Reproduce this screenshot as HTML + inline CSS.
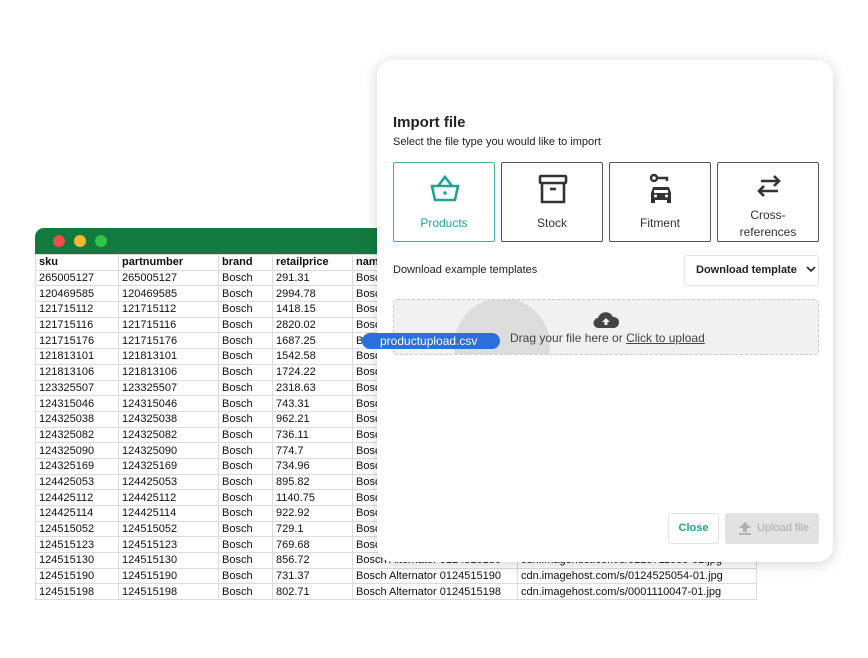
<!DOCTYPE html>
<html><head><meta charset="utf-8"><style>
*{box-sizing:border-box;margin:0;padding:0}
body{width:868px;height:658px;background:#fff;position:relative;overflow:hidden;font-family:"Liberation Sans",sans-serif;}
.win{position:absolute;left:35px;top:228px;width:721px;}
.tb{height:26px;background:#137a3f;border-radius:9px 9px 0 0;position:relative}
.dot{position:absolute;top:7px;width:12px;height:12px;border-radius:50%}
table{border-collapse:collapse;font-size:11px;color:#111;table-layout:fixed;width:721px}
td{height:15.7px;border:1px solid #dcdcdc;padding:0 3px;white-space:nowrap;overflow:hidden;line-height:14px}
tr.h td{font-weight:bold}
.modal{position:absolute;left:377px;top:60px;width:456px;height:502px;background:#fff;border-radius:16px;box-shadow:0 2px 14px rgba(0,0,0,.18)}
.t1{position:absolute;left:16px;top:54px;font-size:15px;font-weight:bold;color:#222}
.t2{position:absolute;left:16px;top:76px;font-size:11px;color:#222}
.card{position:absolute;top:102px;width:102px;height:80px;border:1px solid #555;border-radius:2px;text-align:center;font-size:12px;color:#333}
.card svg{position:absolute;left:35px;top:10px}
.card span{position:absolute;left:0;right:0;top:53px}
.dz{position:absolute;left:16px;top:239px;width:426px;height:56px;background:#f1f1f1;border:1px dashed #ccc;border-radius:4px;overflow:hidden}
</style></head><body>
<div class="win">
<div class="tb"><div class="dot" style="left:18px;background:#ee4f4a"></div><div class="dot" style="left:39px;background:#f8b731"></div><div class="dot" style="left:60px;background:#2fc544"></div></div>
<table>
<colgroup><col style="width:83px"><col style="width:100px"><col style="width:54px"><col style="width:80px"><col style="width:165px"><col style="width:239px"></colgroup>
<tr class="h"><td>sku</td><td>partnumber</td><td>brand</td><td>retailprice</td><td>name</td><td>image</td></tr>
<tr><td>265005127</td><td>265005127</td><td>Bosch</td><td>291.31</td><td>Bosch</td><td></td></tr>
<tr><td>120469585</td><td>120469585</td><td>Bosch</td><td>2994.78</td><td>Bosch</td><td></td></tr>
<tr><td>121715112</td><td>121715112</td><td>Bosch</td><td>1418.15</td><td>Bosch</td><td></td></tr>
<tr><td>121715116</td><td>121715116</td><td>Bosch</td><td>2820.02</td><td>Bosch</td><td></td></tr>
<tr><td>121715176</td><td>121715176</td><td>Bosch</td><td>1687.25</td><td>Bosch</td><td></td></tr>
<tr><td>121813101</td><td>121813101</td><td>Bosch</td><td>1542.58</td><td>Bosch</td><td></td></tr>
<tr><td>121813106</td><td>121813106</td><td>Bosch</td><td>1724.22</td><td>Bosch</td><td></td></tr>
<tr><td>123325507</td><td>123325507</td><td>Bosch</td><td>2318.63</td><td>Bosch</td><td></td></tr>
<tr><td>124315046</td><td>124315046</td><td>Bosch</td><td>743.31</td><td>Bosch</td><td></td></tr>
<tr><td>124325038</td><td>124325038</td><td>Bosch</td><td>962.21</td><td>Bosch</td><td></td></tr>
<tr><td>124325082</td><td>124325082</td><td>Bosch</td><td>736.11</td><td>Bosch</td><td></td></tr>
<tr><td>124325090</td><td>124325090</td><td>Bosch</td><td>774.7</td><td>Bosch</td><td></td></tr>
<tr><td>124325169</td><td>124325169</td><td>Bosch</td><td>734.96</td><td>Bosch</td><td></td></tr>
<tr><td>124425053</td><td>124425053</td><td>Bosch</td><td>895.82</td><td>Bosch</td><td></td></tr>
<tr><td>124425112</td><td>124425112</td><td>Bosch</td><td>1140.75</td><td>Bosch</td><td></td></tr>
<tr><td>124425114</td><td>124425114</td><td>Bosch</td><td>922.92</td><td>Bosch</td><td></td></tr>
<tr><td>124515052</td><td>124515052</td><td>Bosch</td><td>729.1</td><td>Bosch</td><td></td></tr>
<tr><td>124515123</td><td>124515123</td><td>Bosch</td><td>769.68</td><td>Bosch</td><td></td></tr>
<tr><td>124515130</td><td>124515130</td><td>Bosch</td><td>856.72</td><td>Bosch Alternator 0124515130</td><td>cdn.imagehost.com/s/0125711055-01.jpg</td></tr>
<tr><td>124515190</td><td>124515190</td><td>Bosch</td><td>731.37</td><td>Bosch Alternator 0124515190</td><td>cdn.imagehost.com/s/0124525054-01.jpg</td></tr>
<tr><td>124515198</td><td>124515198</td><td>Bosch</td><td>802.71</td><td>Bosch Alternator 0124515198</td><td>cdn.imagehost.com/s/0001110047-01.jpg</td></tr>
</table>
</div>
<div class="modal">
<div class="t1">Import file</div>
<div class="t2">Select the file type you would like to import</div>
<div class="card" style="left:16px;border-color:#3bb3a6;color:#22a294">
<svg width="32" height="32" viewBox="0 0 32 32" fill="none" stroke="#22a294" stroke-width="2.6"><path d="M9 13 L16 4 L23 13"/><path d="M3 13 H29 L26 27 H6 Z"/><circle cx="16" cy="20" r="1.8" fill="#22a294" stroke="none"/></svg><span>Products</span></div>
<div class="card" style="left:124px">
<svg width="32" height="32" viewBox="0 0 32 32" fill="none" stroke="#333" stroke-width="2.6"><rect x="3" y="3" width="26" height="7" rx="1"/><path d="M5 10 V29 H27 V10"/><path d="M13 16 H19"/></svg><span>Stock</span></div>
<div class="card" style="left:232px">
<svg width="32" height="32" viewBox="0 0 32 32"><circle cx="9" cy="5" r="3" fill="none" stroke="#333" stroke-width="2.4"/><path d="M12 5 H22 V8" fill="none" stroke="#333" stroke-width="2.4"/><path d="M8 14 H24 L26 20 V30 H22 V27 H10 V30 H6 V20 Z" fill="#333"/><rect x="9" y="17" width="14" height="3" fill="#fff"/><circle cx="10.5" cy="23" r="1.5" fill="#fff"/><circle cx="21.5" cy="23" r="1.5" fill="#fff"/></svg><span>Fitment</span></div>
<div class="card" style="left:340px">
<svg width="32" height="26" viewBox="0 0 32 26" fill="none" stroke="#333" stroke-width="2.6"><path d="M8 8 H26 M21 3 L26 8 L21 13"/><path d="M25 18 H6 M11 13 L6 18 L11 23"/></svg><span style="top:44px;line-height:17px">Cross-<br>references</span></div>
<div style="position:absolute;left:16px;top:204px;font-size:11px;color:#222">Download example templates</div>
<div style="position:absolute;left:307px;top:195px;width:135px;height:31px;border:1px solid #e3e3e3;border-radius:3px;font-size:11px;font-weight:bold;color:#222;line-height:29px;padding-left:11px">Download template <svg width="10" height="8" viewBox="0 0 10 8" style="margin-left:6px"><path d="M1 2 L5 6 L9 2" fill="none" stroke="#222" stroke-width="1.6"/></svg></div>
<div class="dz">
<div style="position:absolute;left:60px;top:-2px;width:96px;height:96px;border-radius:50%;background:#dcdcdc"></div>
<svg width="26" height="18" viewBox="0 0 26 18" style="position:absolute;left:199px;top:11px"><path d="M6 17 A5 5 0 0 1 5 7 A8 8 0 0 1 20 6 A5.5 5.5 0 0 1 21 17 Z" fill="#444"/><path d="M13 7 L9 11 H11.5 V14 H14.5 V11 H17 Z" fill="#f1f1f1"/></svg>
<div style="position:absolute;left:116px;top:31px;font-size:12px;color:#444">Drag your file here or <u>Click to upload</u></div>
</div>
<div style="position:absolute;left:291px;top:453px;width:51px;height:31px;border:1px solid #e3e3e3;border-radius:3px;font-size:11px;font-weight:bold;color:#22a294;text-align:center;line-height:29px">Close</div>
<div style="position:absolute;left:348px;top:453px;width:94px;height:31px;background:#e2e2e2;border-radius:3px;font-size:11px;color:#aaa;line-height:31px;padding-left:32px"><svg width="12" height="13" viewBox="0 0 12 13" style="position:absolute;left:14px;top:9px"><path d="M6 0 L12 6 H8 V10 H4 V6 H0 Z M0 11 H12 V13 H0 Z" fill="#b0b0b0"/></svg>Upload file</div>
</div>
<div style="position:absolute;left:362px;top:333px;width:138px;height:16px;background:#2a6fdb;border-radius:8px;color:#fff;font-size:12px;line-height:16px;padding-left:18px">productupload.csv</div>
</body></html>
